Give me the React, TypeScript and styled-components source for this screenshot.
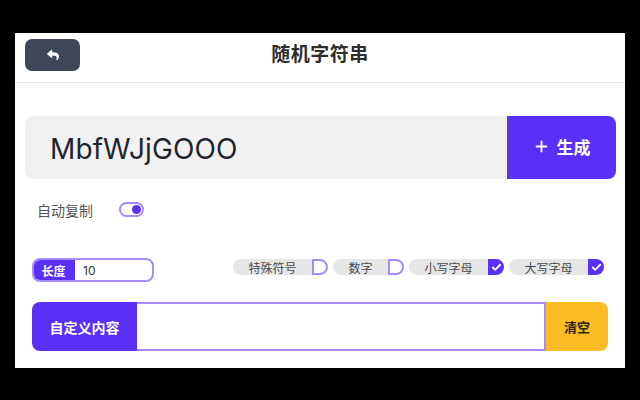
import React, { useState } from "react";
import styled, { createGlobalStyle } from "styled-components";
import { FaReply } from "react-icons/fa";
import { Plus, Check } from "lucide-react";

const GlobalStyle = createGlobalStyle`
  html, body { margin: 0; padding: 0; background: #000; }
  body { font-family: "Inter", "Noto Sans CJK SC", sans-serif; }
  * { box-sizing: border-box; }
`;

const PURPLE = "#5a2ff6";
const LIGHT_PURPLE = "#a78bfa";

const Page = styled.div`
  width: 640px;
  height: 400px;
  padding: 33px 15px 32px 15px;
`;

const Panel = styled.div`
  width: 610px;
  height: 335px;
  background: #fff;
  display: flex;
  flex-direction: column;
`;

const Header = styled.header`
  height: 50px;
  border-bottom: 1px solid #e6e8eb;
  display: grid;
  grid-template-columns: 1fr auto 1fr;
  align-items: center;
  padding: 0 10px;
`;

const BackButton = styled.button`
  width: 55px;
  height: 32px;
  border: none;
  border-radius: 7px;
  background: #3f4656;
  color: #fff;
  display: flex;
  align-items: center;
  justify-content: center;
  padding: 0;
  margin-top: -6px;
  justify-self: start;
`;

const Title = styled.h1`
  margin: 0;
  margin-top: -10px;
  font-family: "Noto Sans CJK SC", sans-serif;
  font-size: 19px;
  font-weight: 600;
  color: #2e2e2e;
  letter-spacing: 0.5px;
`;

const DisplayRow = styled.div`
  display: flex;
  height: 63px;
  margin: 33px 9px 0 10px;
`;

const DisplayText = styled.div`
  flex: 1;
  background: #f1f1f1;
  border-radius: 8px 0 0 8px;
  display: flex;
  align-items: center;
  padding-left: 25px;
  padding-top: 2px;
  font-family: "Inter", sans-serif;
  font-size: 28px;
  color: #1f2430;
  letter-spacing: 0.1px;
`;

const GenerateButton = styled.button`
  width: 109px;
  border: none;
  background: ${PURPLE};
  color: #fff;
  border-radius: 0 8px 8px 0;
  display: flex;
  align-items: center;
  justify-content: center;
  gap: 7px;
  font-family: "Noto Sans CJK SC", sans-serif;
  font-size: 17px;
  font-weight: 700;
  padding: 0 0 2px 0;
`;

const AutoRow = styled.div`
  display: flex;
  align-items: center;
  gap: 26px;
  height: 17px;
  margin: 22px 0 0 22px;
`;

const AutoLabel = styled.span`
  font-family: "Noto Sans CJK SC", sans-serif;
  font-size: 14px;
  color: #555;
`;

const Toggle = styled.span<{ $on: boolean }>`
  width: 25px;
  height: 15px;
  border: 2px solid ${LIGHT_PURPLE};
  border-radius: 8px;
  background: #fff;
  display: flex;
  align-items: center;
  justify-content: ${(p) => (p.$on ? "flex-end" : "flex-start")};
  padding: 0 1px;
`;

const Knob = styled.span`
  width: 9px;
  height: 9px;
  border-radius: 50%;
  background: ${PURPLE};
`;

const OptionsRow = styled.div`
  display: flex;
  justify-content: space-between;
  align-items: flex-start;
  margin: 40px 21px 0 17px;
  height: 24px;
`;

const LengthGroup = styled.div`
  width: 122px;
  height: 24px;
  border: 2px solid ${LIGHT_PURPLE};
  border-radius: 8px;
  display: flex;
  overflow: hidden;
`;

const LengthLabel = styled.span`
  width: 43px;
  margin: -2px 0 -2px -2px;
  background: ${PURPLE};
  color: #fff;
  font-family: "Noto Sans CJK SC", sans-serif;
  font-size: 12px;
  font-weight: 700;
  display: flex;
  align-items: center;
  justify-content: center;
  border-radius: 8px 0 0 8px;
`;

const LengthValue = styled.span`
  flex: 1;
  padding-left: 8px;
  display: flex;
  align-items: center;
  font-family: "Inter", sans-serif;
  font-size: 12px;
  color: #333;
`;

const Chips = styled.div`
  display: flex;
  gap: 5px;
  padding-top: 1px;
`;

const Chip = styled.label`
  display: flex;
  height: 16px;
`;

const ChipText = styled.span<{ $w: number }>`
  width: ${(p) => p.$w}px;
  background: #e6e6e6;
  border-radius: 8px 0 0 8px;
  display: flex;
  align-items: center;
  justify-content: center;
  font-family: "Noto Sans CJK SC", sans-serif;
  font-size: 12px;
  color: #4a4a4a;
`;

const Box = styled.span<{ $checked: boolean }>`
  width: 16px;
  height: 16px;
  border: 2px solid ${(p) => (p.$checked ? PURPLE : LIGHT_PURPLE)};
  background: ${(p) => (p.$checked ? PURPLE : "#fff")};
  border-radius: 0 8px 8px 0;
  display: flex;
  align-items: center;
  justify-content: center;
  color: #fff;
`;

const CustomRow = styled.div`
  display: flex;
  height: 49px;
  margin: 20px 17px 0 17px;
`;

const CustomLabel = styled.span`
  width: 105px;
  background: ${PURPLE};
  color: #fff;
  border-radius: 8px 0 0 8px;
  display: flex;
  align-items: center;
  justify-content: center;
  font-family: "Noto Sans CJK SC", sans-serif;
  font-size: 14px;
  font-weight: 700;
`;

const CustomInput = styled.input`
  flex: 1;
  min-width: 0;
  border: 2px solid ${LIGHT_PURPLE};
  border-left: none;
  outline: none;
  background: #fff;
  font-size: 14px;
`;

const ClearButton = styled.button`
  width: 62px;
  border: none;
  background: #fbbd23;
  color: #2a2414;
  border-radius: 0 8px 8px 0;
  font-family: "Noto Sans CJK SC", sans-serif;
  font-size: 13px;
  font-weight: 700;
  padding: 0;
`;

const options = [
  { label: "特殊符号", w: 79, checked: false },
  { label: "数字", w: 55, checked: false },
  { label: "小写字母", w: 79, checked: true },
  { label: "大写字母", w: 79, checked: true },
];

export default function App() {
  const [auto] = useState(true);
  return (
    <>
      <GlobalStyle />
      <Page>
        <Panel>
          <Header>
            <BackButton aria-label="back">
              <FaReply size={12} />
            </BackButton>
            <Title>随机字符串</Title>
            <span />
          </Header>
          <DisplayRow>
            <DisplayText>MbfWJjGOOO</DisplayText>
            <GenerateButton>
              <Plus size={17} strokeWidth={2.6} />
              生成
            </GenerateButton>
          </DisplayRow>
          <AutoRow>
            <AutoLabel>自动复制</AutoLabel>
            <Toggle $on={auto}>
              <Knob />
            </Toggle>
          </AutoRow>
          <OptionsRow>
            <LengthGroup>
              <LengthLabel>长度</LengthLabel>
              <LengthValue>10</LengthValue>
            </LengthGroup>
            <Chips>
              {options.map((o) => (
                <Chip key={o.label}>
                  <ChipText $w={o.w}>{o.label}</ChipText>
                  <Box $checked={o.checked}>
                    {o.checked && <Check size={11} strokeWidth={4} />}
                  </Box>
                </Chip>
              ))}
            </Chips>
          </OptionsRow>
          <CustomRow>
            <CustomLabel>自定义内容</CustomLabel>
            <CustomInput />
            <ClearButton>清空</ClearButton>
          </CustomRow>
        </Panel>
      </Page>
    </>
  );
}
